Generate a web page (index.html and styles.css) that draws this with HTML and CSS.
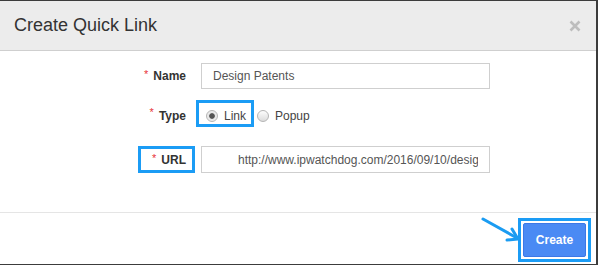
FILE: index.html
```html
<!DOCTYPE html>
<html>
<head>
    <meta charset="UTF-8">
    <link rel="stylesheet" href="styles.css">
</head>

<body>
    <div class="modal">
        <div class="modal-header">
            <h3 class="title">Create Quick Link</h3>
            <svg class="close" width="12" height="12" viewBox="0 0 12 12">
                <path d="M1.5 1.5 L10.5 10.5 M10.5 1.5 L1.5 10.5" stroke="#bdbdbd" stroke-width="2.6" />
            </svg>
        </div>

        <div class="modal-body">
            <div class="row row-name">
                <label class="label"><span class="req">*</span>Name</label>
                <input type="text" class="field" value="Design Patents" />
            </div>

            <div class="row row-type">
                <label class="label"><span class="req">*</span>Type</label>
                <div class="options">
                    <label class="option marked"><input type="radio" name="type" checked />Link</label>
                    <label class="option"><input type="radio" name="type" />Popup</label>
                </div>
            </div>

            <div class="row row-url">
                <label class="label marked"><span class="req">*</span>URL</label>
                <input type="text" class="field url" value="http://www.ipwatchdog.com/2016/09/10/design-patents" />
            </div>
        </div>

        <div class="modal-footer">
            <svg class="arrow" width="46" height="32" viewBox="0 0 46 32">
                <path d="M5 6 L39 25" stroke="#1b9cf2" stroke-width="3" stroke-linecap="round" />
                <path d="M34 16 L40 26 L29 27" stroke="#1b9cf2" stroke-width="3" fill="none" stroke-linecap="round" stroke-linejoin="round" />
            </svg>
            <div class="btn-mark">
                <button class="btn-create">Create</button>
            </div>
        </div>
    </div>
</body>
</html>
```

FILE: styles.css
```css
body {
    margin: 0;
    background: #3c3c3c;
    overflow: hidden;
    font-family: "Liberation Sans", Arial, sans-serif;
}

.modal {
    width: 596px;
    height: 263px;
    margin-top: 1px;
    background: #fff;
    display: flex;
    flex-direction: column;
}

.modal-header {
    height: 49px;
    background: #ececec;
    border-bottom: 1px solid #cfcfcf;
    display: flex;
    align-items: center;
    justify-content: space-between;
    padding: 0 15px 0 14px;
}

.title {
    margin: 0;
    font-size: 18px;
    font-weight: normal;
    color: #333;
}

.close {
    display: block;
}

.modal-body {
    height: 161px;
    box-sizing: border-box;
    padding-top: 11px;
}

.row {
    display: grid;
    grid-template-columns: 195px 289px;
    column-gap: 6px;
    align-items: center;
}

.row-type {
    margin-top: 11px;
    height: 27px;
}

.row-type .label {
    padding-top: 5px;
}

.row-url {
    margin-top: 19px;
}

.label {
    justify-self: end;
    box-sizing: border-box;
    height: 27px;
    display: flex;
    align-items: center;
    padding: 0 6px 0 11px;
    border: 3px solid transparent;
    font-size: 12px;
    font-weight: bold;
    color: #333;
}

.marked {
    border: 3px solid #1b9cf5;
}

.req {
    color: #e8333a;
    font-size: 11px;
    font-weight: normal;
    align-self: flex-start;
    margin-top: 3px;
    margin-right: 5px;
}

.row-type .req {
    margin-top: -2px;
}

.field {
    box-sizing: border-box;
    height: 26px;
    width: 289px;
    margin: 0;
    border: 1px solid #cfcfcf;
    padding: 0 8px 0 11px;
    font-family: "Liberation Sans", Arial, sans-serif;
    font-size: 12px;
    color: #555;
    outline: none;
}

.field.url {
    height: 27px;
    padding: 0 11px 0 36px;
}

.options {
    display: flex;
    align-items: center;
    margin-left: -5px;
    font-size: 12px;
    color: #444;
}

.option {
    display: flex;
    align-items: center;
    box-sizing: border-box;
    height: 27px;
    padding-top: 4px;
}

.option.marked {
    padding: 4px 5px 0 7px;
}

.option + .option {
    margin-left: 3px;
}

.option input {
    appearance: none;
    -webkit-appearance: none;
    width: 12px;
    height: 12px;
    margin: 0 6px 0 0;
    border: 1px solid #b5b5b5;
    border-radius: 50%;
    background: linear-gradient(#fdfdfd, #dcdcdc);
}

.option input:checked {
    background: radial-gradient(circle, #555 2.4px, #e6e6e6 3.2px, #f4f4f4);
}

.modal-footer {
    position: relative;
    flex: 1;
    border-top: 1px solid #e5e5e5;
    display: flex;
    justify-content: flex-end;
    align-items: flex-start;
    padding: 5px 5px 0 0;
}

.arrow {
    position: absolute;
    left: 478px;
    top: 0;
}

.btn-mark {
    border: 3px solid #1b9cf5;
    padding: 2px;
    background: #fff;
}

.btn-create {
    display: block;
    width: 63px;
    height: 34px;
    border: 1px solid #3b78e7;
    border-radius: 2px;
    background: #4a8af4;
    color: #fff;
    font-family: "Liberation Sans", Arial, sans-serif;
    font-size: 12px;
    font-weight: bold;
}
```
